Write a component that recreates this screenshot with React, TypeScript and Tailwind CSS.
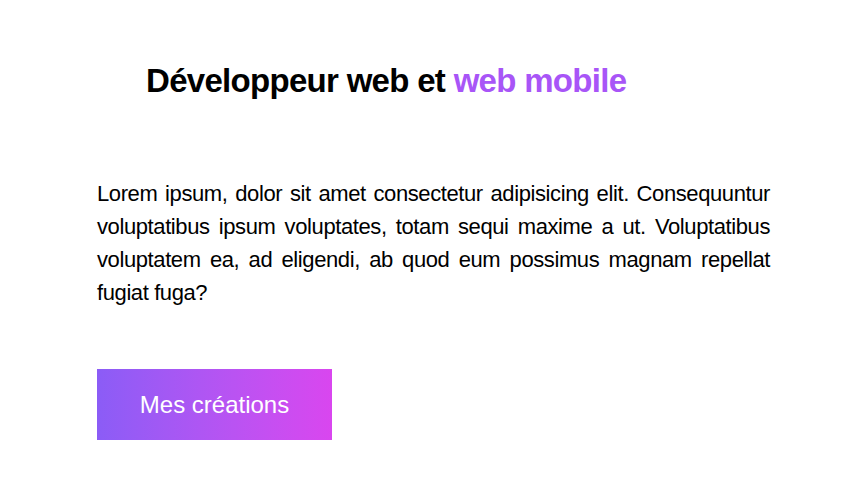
import React from 'react';

const App: React.FC = () => {
    return (
        <div className="w-full min-h-screen bg-white font-['Liberation_Sans',Arial,sans-serif] text-black">
            <div className="pt-[61px] pl-[146px]">
                <h1 className="text-[33px] leading-[40px] font-bold tracking-[-0.7px]">
                    Développeur web et <span className="text-[#a855f7]">web mobile</span>
                </h1>
            </div>
            <div className="ml-[97px] w-[673px] mt-[76px]">
                <p className="text-[22px] leading-[33px] tracking-[-0.4px] text-justify">
                    Lorem ipsum, dolor sit amet consectetur adipisicing elit. Consequuntur voluptatibus ipsum voluptates, totam sequi maxime a ut. Voluptatibus voluptatem ea, ad eligendi, ab quod eum possimus magnam repellat fugiat fuga?
                </p>
                <button className="mt-[60px] w-[235px] h-[71px] flex items-center justify-center bg-gradient-to-r from-[#8b5cf6] to-[#d946ef] text-white text-2xl">
                    Mes créations
                </button>
            </div>
        </div>
    )
}

export default App;
